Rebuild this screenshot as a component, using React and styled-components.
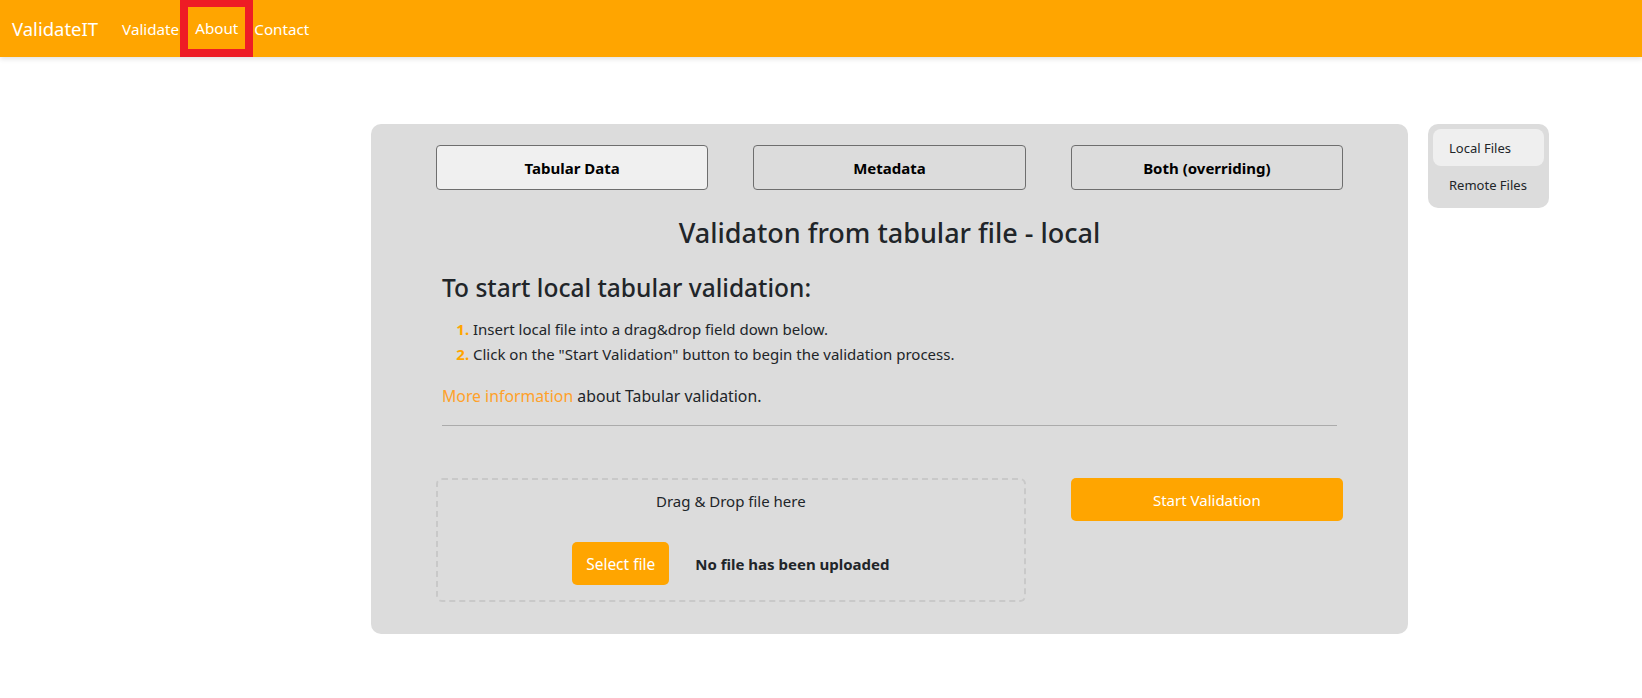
import { useState } from 'react';
import { styled, createGlobalStyle } from 'styled-components';

const GlobalStyle = createGlobalStyle`
  body {
    margin: 0;
    background: #fff;
    color: #212529;
    font-family: "Noto Sans", "Open Sans", sans-serif;
  }
  * { box-sizing: border-box; }
`;

const NavBar = styled.nav`
  display: flex;
  align-items: center;
  height: 57px;
  padding-left: 12px;
  background: #ffa500;
  box-shadow: 0 2px 5px rgba(0, 0, 0, 0.12);
`;

const Brand = styled.a`
  color: #fff;
  font-size: 18.5px;
  margin-right: 23px;
  text-decoration: none;
`;

const NavLink = styled.a`
  display: flex;
  align-items: center;
  height: 57px;
  color: #fff;
  font-size: 15.2px;
  text-decoration: none;
  padding: 0 ${(p) => (p.$marked ? '7px' : '1px')};
  border: ${(p) => (p.$marked ? '8px solid #ee1c25' : 'none')};
  border-top-width: ${(p) => (p.$marked ? '7px' : '0')};
`;

const Page = styled.div`
  display: grid;
  grid-template-columns: 1037px 121px;
  column-gap: 20px;
  align-items: start;
  padding: 67px 0 0 371px;
`;

const Card = styled.section`
  height: 510px;
  background: #dcdcdc;
  border-radius: 10px;
  padding: 21px 65px;
`;

const Columns = styled.div`
  display: grid;
  grid-template-columns: repeat(3, 1fr);
  column-gap: 45px;
  align-items: start;
`;

const TabButton = styled.button`
  height: 45px;
  border: 1px solid #6e6e6e;
  border-radius: 4px;
  background: ${(p) => (p.$active ? '#f0f0f0' : 'transparent')};
  color: #000;
  font-family: inherit;
  font-size: 15px;
  font-weight: 700;
  cursor: pointer;
`;

const Title = styled.h3`
  margin: 26px 0 0;
  text-align: center;
  font-size: 27px;
  font-weight: 500;
  line-height: 34px;
`;

const Info = styled.div`
  padding: 0 6px;
`;

const Subtitle = styled.h4`
  margin: 23px 0 0;
  font-size: 24.5px;
  font-weight: 500;
  line-height: 30px;
`;

const Steps = styled.ol`
  margin: 14px 0 0;
  padding-left: 31px;
  font-size: 15px;
  line-height: 25px;

  li::marker {
    color: #ffa500;
    font-weight: 700;
  }
`;

const Paragraph = styled.p`
  margin: 17px 0 0;
  font-size: 15.8px;
  line-height: 25px;
`;

const OrangeLink = styled.a`
  color: #ffa12a;
  text-decoration: none;
`;

const Divider = styled.hr`
  margin: 16px 0 0;
  border: none;
  border-top: 1px solid #ababab;
`;

const BottomRow = styled(Columns)`
  margin-top: 52px;
`;

const DropZone = styled.div`
  grid-column: span 2;
  height: 124px;
  border: 2px dashed #c9c9c9;
  border-radius: 6px;
  padding-top: 11px;
  display: flex;
  flex-direction: column;
  align-items: center;
`;

const DropHint = styled.div`
  font-size: 15px;
  line-height: 21px;
`;

const UploadRow = styled.div`
  display: flex;
  align-items: center;
  gap: 26px;
  margin-top: 30px;
`;

const OrangeButton = styled.button`
  height: 43px;
  padding: 0 14px;
  border: none;
  border-radius: 5px;
  background: #ffa500;
  color: #fff;
  font-family: inherit;
  font-size: ${(p) => (p.$compact ? '15.5px' : '15px')};
  cursor: pointer;
`;

const FileStatus = styled.span`
  font-size: 15px;
  font-weight: 700;
`;

const SideNav = styled.aside`
  display: flex;
  flex-direction: column;
  background: #dcdcdc;
  border-radius: 10px;
  padding: 5px;
`;

const SideItem = styled.a`
  height: 37px;
  display: flex;
  align-items: center;
  padding-left: 16px;
  border-radius: 8px;
  font-size: 13px;
  color: #212529;
  background: ${(p) => (p.$active ? '#efefef' : 'transparent')};
  cursor: pointer;
`;

const tabs = ['Tabular Data', 'Metadata', 'Both (overriding)'];

export default function App() {
  const [tab, setTab] = useState('Tabular Data');
  const [source, setSource] = useState('local');

  return (
    <>
      <GlobalStyle />
      <NavBar>
        <Brand href="#">ValidateIT</Brand>
        <NavLink href="#">Validate</NavLink>
        <NavLink href="#" $marked>About</NavLink>
        <NavLink href="#">Contact</NavLink>
      </NavBar>
      <Page>
        <Card>
          <Columns>
            {tabs.map((t) => (
              <TabButton key={t} $active={tab === t} onClick={() => setTab(t)}>
                {t}
              </TabButton>
            ))}
          </Columns>
          <Title>Validaton from tabular file - local</Title>
          <Info>
            <Subtitle>To start local tabular validation:</Subtitle>
            <Steps>
              <li>Insert local file into a drag&amp;drop field down below.</li>
              <li>Click on the "Start Validation" button to begin the validation process.</li>
            </Steps>
            <Paragraph>
              <OrangeLink href="#">More information</OrangeLink> about Tabular validation.
            </Paragraph>
            <Divider />
          </Info>
          <BottomRow>
            <DropZone>
              <DropHint>Drag &amp; Drop file here</DropHint>
              <UploadRow>
                <OrangeButton $compact>Select file</OrangeButton>
                <FileStatus>No file has been uploaded</FileStatus>
              </UploadRow>
            </DropZone>
            <OrangeButton>Start Validation</OrangeButton>
          </BottomRow>
        </Card>
        <SideNav>
          <SideItem $active={source === 'local'} onClick={() => setSource('local')}>
            Local Files
          </SideItem>
          <SideItem $active={source === 'remote'} onClick={() => setSource('remote')}>
            Remote Files
          </SideItem>
        </SideNav>
      </Page>
    </>
  );
}
